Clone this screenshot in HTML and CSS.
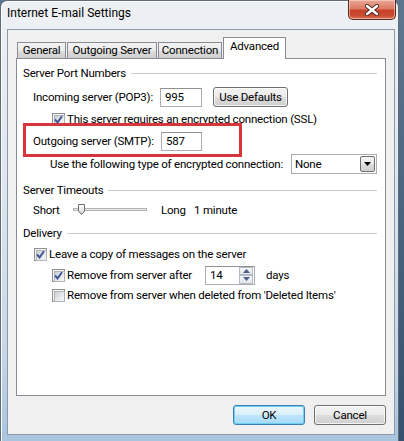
FILE: index.html
```html
<!DOCTYPE html>
<html>
<head>
<meta charset="utf-8">
<link rel="stylesheet" href="styles.css">
</head>
<body>
<div class="window">
  <div class="titlebar">
    <span class="title">Internet E-mail Settings</span>
    <div class="close">
      <svg width="18" height="12" viewBox="0 0 18 12"><path d="M4 2 L14 10 M14 2 L4 10" stroke="#4a2a24" stroke-width="4.2" stroke-linecap="round"/><path d="M4 2 L14 10 M14 2 L4 10" stroke="#ffffff" stroke-width="2.4" stroke-linecap="round"/></svg>
    </div>
  </div>
  <div class="dialog">
    <div class="tabs">
      <div class="tab t-general">General</div>
      <div class="tab t-outgoing">Outgoing Server</div>
      <div class="tab t-connection">Connection</div>
      <div class="tab t-advanced active">Advanced</div>
    </div>
    <div class="page">
      <div class="group"><span>Server Port Numbers</span><i class="rule"></i></div>

      <div class="row r-incoming">
        <span class="lbl">Incoming server (POP3):</span>
        <span class="field f-port">995</span>
        <span class="btn btn-defaults">Use Defaults</span>
      </div>

      <div class="row r-ssl">
        <span class="cb checked"><svg width="9" height="9" viewBox="0 0 9 9"><path d="M1 4.5 L3.6 7.4 L8 1.2" stroke="#3f5595" stroke-width="1.9" fill="none"/></svg></span>
        <span class="cbl">This server requires an encrypted connection (SSL)</span>
      </div>

      <div class="row r-outgoing">
        <span class="lbl lbl-out">Outgoing server (SMTP):</span>
        <span class="field f-port2">587</span>
      </div>

      <div class="row r-enc">
        <span>Use the following type of encrypted connection:</span>
        <span class="combo"><span class="combo-val">None</span><span class="combo-btn"><svg width="7" height="4" viewBox="0 0 7 4"><path d="M0 0 H7 L3.5 4 Z" fill="#000"/></svg></span></span>
      </div>

      <div class="group g-timeouts"><span>Server Timeouts</span><i class="rule"></i></div>

      <div class="row r-short">
        <span class="short">Short</span>
        <svg class="slider" width="74" height="12" viewBox="0 0 74 12">
          <defs><linearGradient id="th" x1="0" y1="0" x2="0" y2="1"><stop offset="0" stop-color="#ffffff"/><stop offset="1" stop-color="#d4d4d4"/></linearGradient></defs>
          <rect x="0.5" y="4.5" width="73" height="2" fill="#e6e6e6" stroke="#b5b5b5"/>
          <path d="M5.5 0.5 H11.5 V7 L8.5 10.5 L5.5 7 Z" fill="url(#th)" stroke="#6f6f6f"/>
        </svg>
        <span class="long">Long</span>
        <span>1 minute</span>
      </div>

      <div class="group g-delivery"><span>Delivery</span><i class="rule"></i></div>

      <div class="row r-leave">
        <span class="cb checked"><svg width="9" height="9" viewBox="0 0 9 9"><path d="M1 4.5 L3.6 7.4 L8 1.2" stroke="#3f5595" stroke-width="1.9" fill="none"/></svg></span>
        <span class="cbl">Leave a copy of messages on the server</span>
      </div>

      <div class="row r-after">
        <span class="cb checked"><svg width="9" height="9" viewBox="0 0 9 9"><path d="M1 4.5 L3.6 7.4 L8 1.2" stroke="#3f5595" stroke-width="1.9" fill="none"/></svg></span>
        <span class="cbl cbl-after">Remove from server after</span>
        <span class="spin"><span class="spin-val">14</span><span class="spin-btns"><span class="sb"><svg width="7" height="4" viewBox="0 0 7 4"><path d="M0 4 H7 L3.5 0 Z" fill="#4d5f86"/></svg></span><span class="sb"><svg width="7" height="4" viewBox="0 0 7 4"><path d="M0 0 H7 L3.5 4 Z" fill="#4d5f86"/></svg></span></span></span>
        <span class="days">days</span>
      </div>

      <div class="row r-when">
        <span class="cb"></span>
        <span class="cbl">Remove from server when deleted from 'Deleted Items'</span>
      </div>

      <div class="highlight"></div>
    </div>
    <div class="buttons">
      <span class="btn btn-dlg default">OK</span>
      <span class="btn btn-dlg">Cancel</span>
    </div>
  </div>
</div>
</body>
</html>
```
FILE: styles.css
```css
* { box-sizing: border-box; }
html, body { margin: 0; padding: 0; }
body {
  width: 404px;
  height: 441px;
  overflow: hidden;
  background: linear-gradient(180deg, #5d7790 0%, #34506c 100%);
  font-family: Roboto, "Noto Sans", sans-serif;
  font-size: 11.5px;
  letter-spacing: -0.2px;
  color: #000;
}
.window {
  width: 399px;
  height: 441px;
  border: 1px solid #5f6b77;
  border-bottom: none;
  border-radius: 7px 7px 0 0;
  background: linear-gradient(180deg, #eef1f4 0%, #dfe6ee 40%, #c6d7e8 80%, #a9c4de 100%);
  display: flex;
  flex-direction: column;
  box-shadow: inset 1px 1px 0 #fbfcfd;
}
.titlebar {
  height: 28px;
  display: flex;
  justify-content: space-between;
  align-items: flex-start;
  padding-left: 6px;
  padding-right: 2px;
}
.title {
  margin-top: 5px;
  font-size: 12px;
  letter-spacing: 0;
  line-height: 15px;
  color: #000;
}
.close {
  width: 48px;
  height: 20px;
  margin-top: -1px;
  border: 1px solid #5b2a22;
  border-top: none;
  border-radius: 0 0 5px 5px;
  background: linear-gradient(180deg, #e9a999 0%, #dc7a63 45%, #c8422a 55%, #c84a2e 80%, #d8745a 100%);
  box-shadow: inset 0 0 0 1px rgba(255, 220, 210, 0.55);
  display: flex;
  align-items: center;
  justify-content: center;
}
.dialog {
  margin-left: 6px;
  width: 388px;
  height: 406px;
  border: 1px solid #8b9aab;
  background: #f0f0f0;
  padding: 7px 8px 0 8px;
  display: flex;
  flex-direction: column;
}
.tabs {
  display: flex;
  align-items: flex-end;
  height: 21px;
  position: relative;
  z-index: 2;
}
.tab {
  height: 16px;
  border: 1px solid #898c95;
  border-bottom: none;
  margin-right: 1px;
  background: linear-gradient(180deg, #f3f3f3 0%, #ebebeb 50%, #dddddd 51%, #cfcfcf 100%);
  line-height: 14px;
  text-align: center;
  white-space: nowrap;
}
.t-general { width: 49px; margin-left: 1px; }
.t-outgoing { width: 90px; }
.t-connection { width: 64px; }
.t-advanced { width: 63px; }
.tab.active {
  height: 22px;
  margin-bottom: -1px;
  background: #ffffff;
  line-height: 17px;
}
.page {
  position: relative;
  width: 370px;
  height: 338px;
  border: 1px solid #898c95;
  background: #ffffff;
  padding: 6px 8px 0 0;
  display: flex;
  flex-direction: column;
}
.group {
  display: flex;
  align-items: center;
  height: 15px;
  padding-left: 6px;
}
.rule {
  flex: 1;
  height: 1px;
  margin-left: 5px;
  margin-top: 1px;
  background: #c9cdd2;
}
.g-timeouts { margin-top: 8px; }
.g-delivery { margin-top: 7px; }
.row {
  display: flex;
  align-items: center;
  white-space: nowrap;
}
.lbl { width: 127px; }
.lbl-out { width: 128px; }
.r-incoming { height: 22px; margin-top: 6px; padding-left: 16px; }
.r-ssl { height: 14px; margin-top: 4px; padding-left: 35px; }
.r-outgoing { height: 22px; margin-top: 4px; padding-left: 16px; }
.r-enc { height: 20px; margin-top: 2px; padding-left: 33px; }
.r-short { height: 16px; margin-top: 5px; padding-left: 16px; }
.r-leave { height: 14px; margin-top: 7px; padding-left: 17px; }
.r-after { height: 20px; margin-top: 4px; padding-left: 35px; }
.r-when { height: 14px; margin-top: 3px; padding-left: 35px; }

.field {
  height: 19px;
  border: 1px solid #abadb3;
  border-top-color: #8e9297;
  background: #fff;
  padding-left: 4px;
  line-height: 17px;
}
.f-port { width: 42px; }
.f-port2 { width: 41px; }

.btn {
  display: flex;
  align-items: center;
  justify-content: center;
  border: 1px solid #707070;
  border-radius: 3px;
  background: linear-gradient(180deg, #f2f2f2 0%, #ebebeb 50%, #dddddd 51%, #cfcfcf 100%);
  box-shadow: inset 0 0 0 1px rgba(255, 255, 255, 0.75);
}
.btn-defaults {
  width: 75px;
  height: 20px;
  margin-left: 11px;
}

.cb {
  width: 13px;
  height: 13px;
  border: 1px solid #8e8f8f;
  background: #f4f4f4;
  display: flex;
  align-items: center;
  justify-content: center;
  position: relative;
  flex: none;
}
.cb::before {
  content: "";
  position: absolute;
  left: 1px;
  top: 1px;
  width: 9px;
  height: 9px;
  border: 1px solid #b1b5bb;
  background: linear-gradient(135deg, #cbcfd5 0%, #e8eaec 60%, #f6f6f6 100%);
}
.cb svg { position: relative; z-index: 1; }
.cbl { margin-left: 2px; }
.cbl-after { width: 138px; }

.combo {
  margin-left: auto;
  width: 86px;
  height: 20px;
  border: 1px solid #abadb3;
  background: #fff;
  display: flex;
  align-items: center;
  justify-content: space-between;
  padding: 0 1px 0 3px;
}
.combo-btn {
  width: 15px;
  height: 16px;
  border: 1px solid #707070;
  border-radius: 2px;
  background: linear-gradient(180deg, #f2f2f2 0%, #ebebeb 50%, #dddddd 51%, #cfcfcf 100%);
  display: flex;
  align-items: center;
  justify-content: center;
}

.short { width: 40px; }
.slider { margin-right: 14px; }
.long { width: 33px; }

.spin {
  width: 50px;
  height: 19px;
  border: 1px solid #abadb3;
  border-top-color: #8e9297;
  background: #fff;
  display: flex;
  align-items: center;
  justify-content: space-between;
  padding: 0 1px 0 4px;
}
.spin-btns {
  display: flex;
  flex-direction: column;
  width: 14px;
  height: 17px;
}
.sb {
  flex: 1;
  border: 1px solid #b6bcc6;
  background: linear-gradient(180deg, #f6f7f9 0%, #e1e5eb 100%);
  display: flex;
  align-items: center;
  justify-content: center;
}
.days { margin-left: 11px; }

.highlight {
  position: absolute;
  left: 6px;
  top: 64px;
  width: 219px;
  height: 34px;
  border: 3px solid #d7343c;
}

.buttons {
  display: flex;
  justify-content: flex-end;
  gap: 9px;
  margin-top: 9px;
}
.btn-dlg {
  width: 72px;
  height: 20px;
}
.btn.default {
  border-color: #3c7fb1;
  background: linear-gradient(180deg, #eaf6fd 0%, #d9f0fc 50%, #bee6fd 51%, #a7d9f5 100%);
  box-shadow: inset 0 0 0 1px #6fd0f7;
}
```
